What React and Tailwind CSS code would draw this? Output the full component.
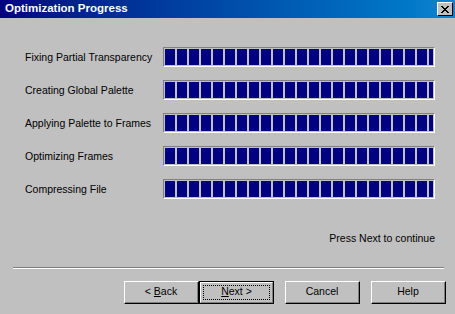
import React from 'react';

const steps = [
  'Fixing Partial Transparency',
  'Creating Global Palette',
  'Applying Palette to Frames',
  'Optimizing Frames',
  'Compressing File',
];

function ProgressBar() {
  return (
    <div className="w-[272px] h-[20px] border border-t-[#808080] border-l-[#808080] border-b-white border-r-white p-px">
      <div className="h-full w-full bg-[repeating-linear-gradient(90deg,#000080_0_10px,transparent_10px_12px)]" />
    </div>
  );
}

function Button({ children, isDefault }) {
  if (isDefault) {
    return (
      <div className="w-[75px] h-[23px] border border-black">
        <div className="h-full w-full border border-t-white border-l-white border-b-[#808080] border-r-[#808080] flex items-center justify-center p-[2px]">
          <div className="h-full w-full border border-dotted border-black flex items-center justify-center">
            {children}
          </div>
        </div>
      </div>
    );
  }
  return (
    <div className="w-[75px] h-[23px] border border-t-white border-l-white border-b-black border-r-black">
      <div className="h-full w-full border-b border-r border-b-[#808080] border-r-[#808080] flex items-center justify-center">
        {children}
      </div>
    </div>
  );
}

export default function App() {
  return (
    <div
      className="w-[455px] h-[314px] bg-[#c0c0c0] flex flex-col text-[10.5px] text-black"
      style={{ fontFamily: '"Liberation Sans", Arial, sans-serif' }}
    >
      {/* title bar */}
      <div className="h-[18px] bg-gradient-to-r from-[#000080] to-[#1084d0] flex items-center justify-between pl-[5px] pr-[2px]">
        <span className="text-white font-bold text-[11.5px] leading-none">Optimization Progress</span>
        <div className="w-[16px] h-[14px] bg-[#c0c0c0] border border-t-white border-l-white border-b-black border-r-black flex items-center justify-center">
          <svg width="8" height="7" viewBox="0 0 8 7" shapeRendering="crispEdges">
            <path d="M0 0h2v1H0zM6 0h2v1H6zM1 1h2v1H1zM5 1h2v1H5zM2 2h4v1H2zM3 3h2v1H3zM2 4h4v1H2zM1 5h2v1H1zM5 5h2v1H5zM0 6h2v1H0zM6 6h2v1H6z" fill="#000" />
          </svg>
        </div>
      </div>

      {/* steps */}
      <div className="flex flex-col gap-[13px] pt-[29px] pl-[25px]">
        {steps.map((s) => (
          <div key={s} className="flex items-center">
            <span className="w-[138px] leading-none">{s}</span>
            <ProgressBar />
          </div>
        ))}
      </div>

      <div className="mt-[34px] pr-[20px] text-right leading-none">Press Next to continue</div>

      {/* separator */}
      <div className="mt-[23px] mx-[13px] w-[431px] border-t border-t-[#808080] border-b border-b-white" />

      {/* buttons */}
      <div className="mt-[12px] flex pl-[124px]">
        <Button>
          <span>&lt; <u>B</u>ack</span>
        </Button>
        <Button isDefault>
          <span><u>N</u>ext &gt;</span>
        </Button>
        <div className="w-[11px]" />
        <Button>Cancel</Button>
        <div className="w-[11px]" />
        <Button>Help</Button>
      </div>
    </div>
  );
}
